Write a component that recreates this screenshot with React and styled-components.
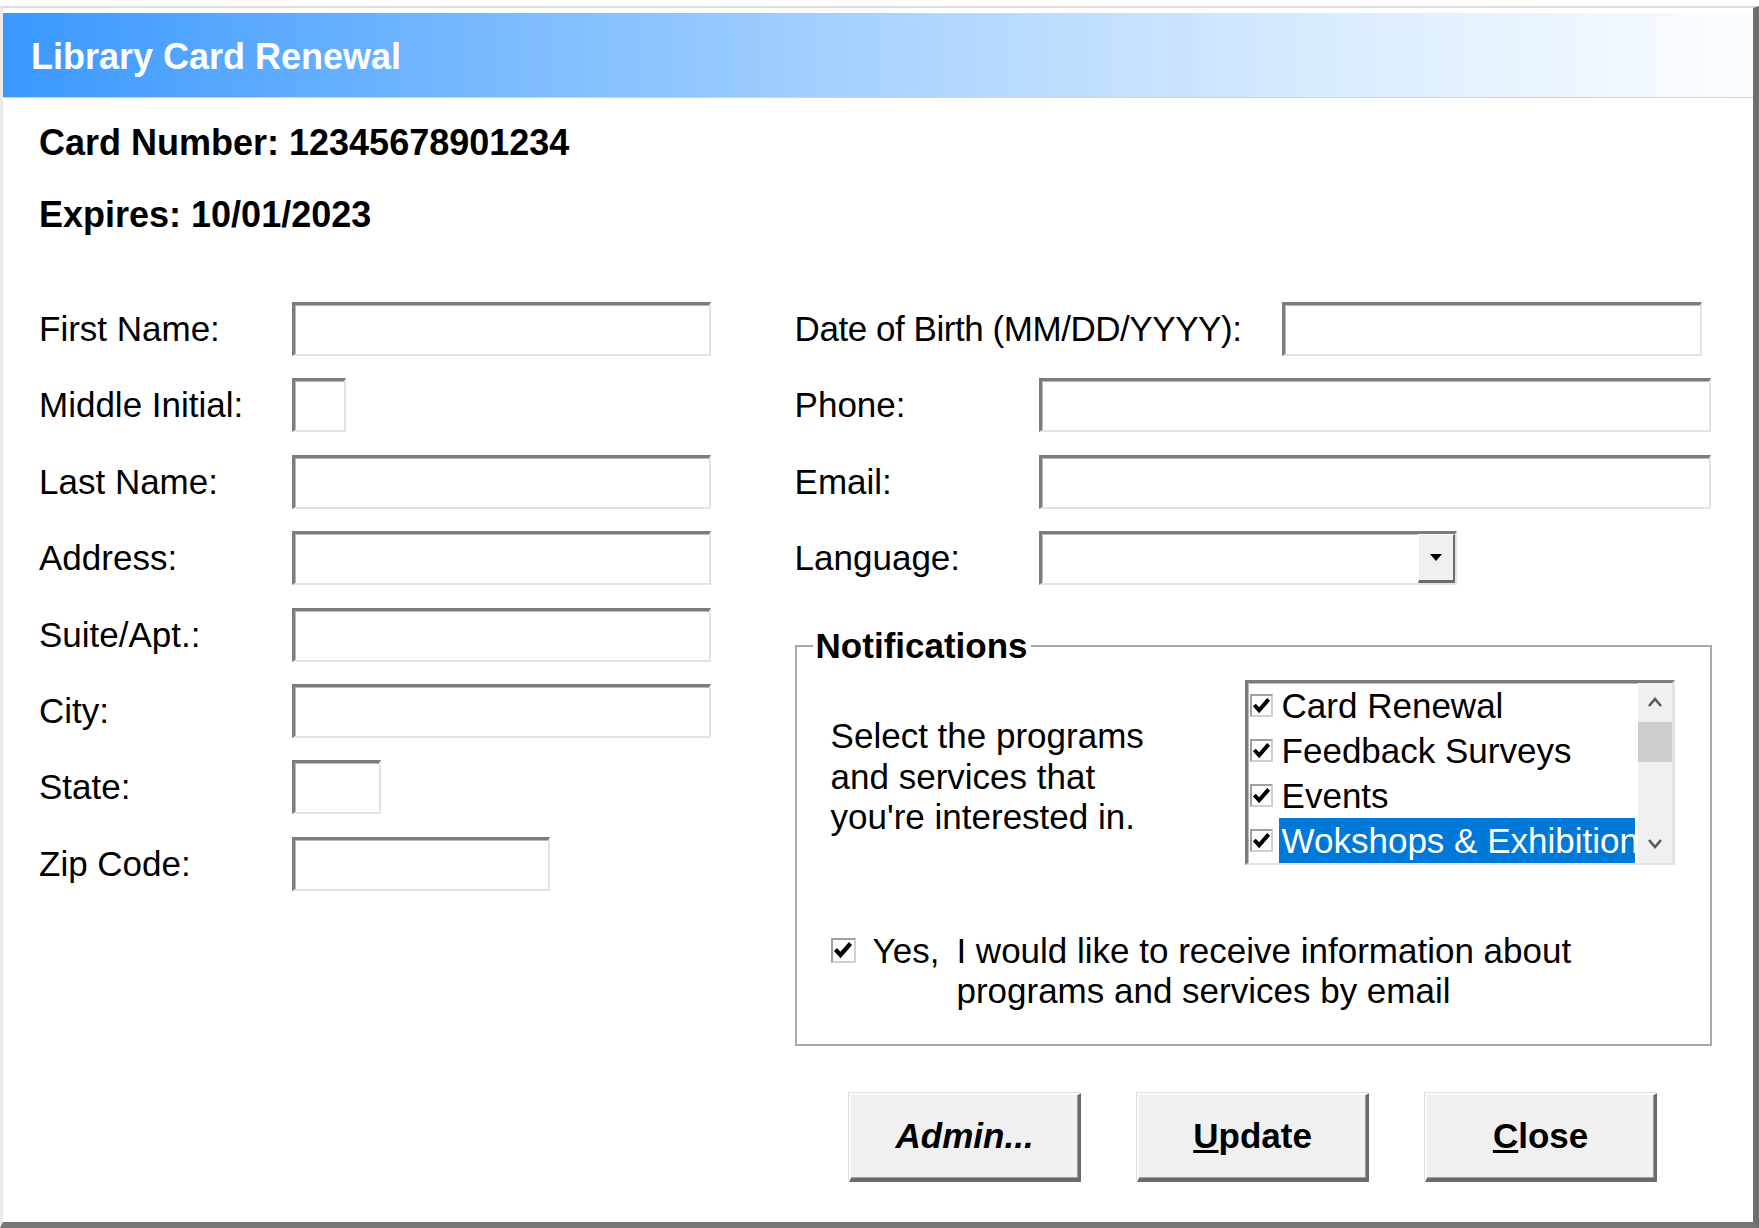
import React from "react";
import styled, { createGlobalStyle } from "styled-components";

const Global = createGlobalStyle`
  html, body { margin: 0; padding: 0; background: #fff; }
  body { font-family: "Liberation Sans", Arial, sans-serif; color: #000; }
  * { box-sizing: border-box; }
`;

const Win = styled.div`
  width: 1759px;
  height: 1222px;
  margin-top: 6px;
  border-top: 2px solid #dcdcdc;
  border-left: 3px solid #ebebeb;
  border-right: 6px solid #6e6e6e;
  border-bottom: 6px solid #767676;
  background: #fff;
  display: flex;
  flex-direction: column;
`;

const TitleBar = styled.div`
  margin-top: 5px;
  height: 85px;
  display: flex;
  align-items: center;
  padding: 4px 0 0 28px;
  background: linear-gradient(
    to right,
    #3a98ff 0%,
    #72b6ff 25%,
    #a9d3ff 50%,
    #d8ebff 75%,
    #fbfdff 100%
  );
  border-bottom: 1px solid #b4d8ff;
  color: #fff;
  font-weight: bold;
  font-size: 36px;
`;

const Content = styled.div`
  padding: 22.8px 0 0 36px;
`;

const InfoLine = styled.div`
  font-weight: bold;
  font-size: 36px;
  line-height: 44px;
  & + & {
    margin-top: 28.2px;
  }
`;

const Form = styled.div`
  display: flex;
  gap: 80.6px;
  margin-top: 65px;
`;

const FieldGrid = styled.div`
  display: grid;
  grid-template-columns: ${(p) => p.$labelCol}px auto;
  grid-auto-rows: 54px;
  row-gap: 22.4px;
  align-items: center;
  width: ${(p) => p.$width}px;
`;

const Label = styled.div`
  font-size: 35px;
  line-height: 40px;
  white-space: nowrap;
  letter-spacing: ${(p) => (p.$tight ? "-0.45px" : "0")};
`;

const TextBox = styled.input`
  display: block;
  width: ${(p) => p.$w}px;
  height: 54px;
  margin: 0 0 0 ${(p) => p.$offset || 0}px;
  padding: 0 6px;
  font: 35px "Liberation Sans", Arial, sans-serif;
  background: #fff;
  border-style: solid;
  border-width: 3px 2px 2px 3px;
  border-color: #7c7c7c #e3e3e3 #e3e3e3 #7c7c7c;
  box-shadow: inset 1px 1px 0 #b9b9b9;
  outline: none;
`;

const RightCol = styled.div`
  width: 917px;
  display: flex;
  flex-direction: column;
`;

const Combo = styled.div`
  width: 418px;
  height: 54px;
  display: flex;
  justify-content: flex-end;
  background: #fff;
  border-style: solid;
  border-width: 3px 2px 2px 3px;
  border-color: #7c7c7c #e3e3e3 #e3e3e3 #7c7c7c;
  box-shadow: inset 1px 1px 0 #b9b9b9;
`;

const ComboButton = styled.div`
  width: 37px;
  height: 100%;
  display: flex;
  align-items: center;
  justify-content: center;
  background: #f0f0f0;
  border-style: solid;
  border-width: 1px 2px 3px 1px;
  border-color: #fff #6b6b6b #6b6b6b #fff;
`;

const Arrow = styled.div`
  width: 0;
  height: 0;
  border-left: 6px solid transparent;
  border-right: 6px solid transparent;
  border-top: 7px solid #000;
`;

const Group = styled.fieldset`
  margin: 40.8px 0 0 0;
  padding: 0 0 32.4px 0;
  min-width: 0;
  width: 917px;
  border: 2px solid #a9a9a9;
`;

const Legend = styled.legend`
  margin-left: 16px;
  padding: 0 3px;
  font-weight: bold;
  font-size: 35px;
  line-height: 40px;
`;

const NotifRow = styled.div`
  display: flex;
  align-items: center;
  margin-top: 14px;
  padding-left: 34px;
`;

const Desc = styled.div`
  width: 414px;
  margin-top: 9px;
  font-size: 35px;
  line-height: 40.5px;
`;

const ListBox = styled.div`
  width: 430px;
  height: 185px;
  display: flex;
  background: #fff;
  border-style: solid;
  border-width: 3px 3px 2px 3px;
  border-color: #7c7c7c #e3e3e3 #e3e3e3 #7c7c7c;
  box-shadow: inset 1px 1px 0 #b9b9b9;
`;

const Items = styled.div`
  flex: 1;
  min-width: 0;
  overflow: hidden;
  display: flex;
  flex-direction: column;
`;

const Item = styled.div`
  height: 45px;
  display: flex;
  align-items: center;
  padding-left: 2px;
`;

const ItemText = styled.div`
  flex: 1;
  height: 45px;
  margin: 0 3px 0 6px;
  padding-left: 3px;
  font-size: 35px;
  line-height: 45px;
  white-space: nowrap;
  overflow: hidden;
  background: ${(p) => (p.$selected ? "#0078d7" : "transparent")};
  color: ${(p) => (p.$selected ? "#fff" : "#000")};
`;

const CheckBox = styled.div`
  flex: none;
  width: ${(p) => p.$size}px;
  height: ${(p) => p.$size}px;
  display: flex;
  align-items: center;
  justify-content: center;
  background: #fff;
  border-style: solid;
  border-width: 2px;
  border-color: #a0a0a0 #d0d0d0 #d0d0d0 #a0a0a0;
`;

const ScrollBar = styled.div`
  width: 34px;
  display: flex;
  flex-direction: column;
  background: #f0f0f0;
`;

const ScrollBtn = styled.div`
  height: 38px;
  display: flex;
  align-items: center;
  justify-content: center;
`;

const Track = styled.div`
  flex: 1;
`;

const Thumb = styled.div`
  height: 40px;
  margin-top: 1px;
  background: #cdcdcd;
`;

const YesRow = styled.div`
  display: flex;
  align-items: flex-start;
  margin-top: 65.6px;
  padding-left: 34px;
  font-size: 35px;
  line-height: 40.5px;
`;

const YesBox = styled(CheckBox)`
  margin-top: 7.4px;
`;

const YesWord = styled.span`
  margin-left: 17px;
`;

const YesText = styled.div`
  margin-left: 17px;
`;

const ButtonRow = styled.div`
  display: flex;
  justify-content: center;
  gap: 56px;
  margin-top: 47px;
`;

const Button = styled.button`
  width: 232px;
  height: 89px;
  padding: 0;
  background: #f0f0f0;
  font-family: "Liberation Sans", Arial, sans-serif;
  font-size: 35px;
  font-weight: bold;
  font-style: ${(p) => (p.$italic ? "italic" : "normal")};
  color: #000;
  border-style: solid;
  border-width: 2px 3px 4px 2px;
  border-color: #fbfbfb #6b6b6b #6b6b6b #fbfbfb;
  box-shadow: -1px -1px 0 #e0e0e0, inset -1px -1px 0 #a0a0a0;
`;

const Check = ({ size = 18 }) => (
  <svg width={size} height={size} viewBox="0 0 20 20">
    <path
      d="M2.5 9.5 L7.5 15 L17.5 3.5"
      fill="none"
      stroke="#000"
      strokeWidth="4.2"
      strokeLinejoin="miter"
    />
  </svg>
);

const Chevron = ({ up }) => (
  <svg width="16" height="12" viewBox="0 0 16 12">
    <path
      d={up ? "M2 10 L8 3 L14 10" : "M2 2 L8 9 L14 2"}
      fill="none"
      stroke="#5a5a5a"
      strokeWidth="2.6"
    />
  </svg>
);

const leftFields = [
  ["First Name:", 419],
  ["Middle Initial:", 54],
  ["Last Name:", 419],
  ["Address:", 419],
  ["Suite/Apt.:", 419],
  ["City:", 419],
  ["State:", 89],
  ["Zip Code:", 258],
];

const listItems = ["Card Renewal", "Feedback Surveys", "Events", "Wokshops & Exhibitions"];

export default function App() {
  return (
    <>
      <Global />
      <Win>
        <TitleBar>Library Card Renewal</TitleBar>
        <Content>
          <InfoLine>Card Number: 12345678901234</InfoLine>
          <InfoLine>Expires: 10/01/2023</InfoLine>
          <Form>
            <FieldGrid $labelCol={253} $width={675}>
              {leftFields.map(([label, w]) => (
                <React.Fragment key={label}>
                  <Label>{label}</Label>
                  <TextBox $w={w} />
                </React.Fragment>
              ))}
            </FieldGrid>
            <RightCol>
              <FieldGrid $labelCol={244} $width={917}>
                <Label $tight>Date of Birth (MM/DD/YYYY):</Label>
                <TextBox $w={420} $offset={243} />
                <Label>Phone:</Label>
                <TextBox $w={672} />
                <Label>Email:</Label>
                <TextBox $w={672} />
                <Label>Language:</Label>
                <Combo>
                  <ComboButton>
                    <Arrow />
                  </ComboButton>
                </Combo>
              </FieldGrid>
              <Group>
                <Legend>Notifications</Legend>
                <NotifRow>
                  <Desc>
                    Select the programs
                    <br />
                    and services that
                    <br />
                    you're interested in.
                  </Desc>
                  <ListBox>
                    <Items>
                      {listItems.map((it, i) => (
                        <Item key={it}>
                          <CheckBox $size={23}>
                            <Check size={19} />
                          </CheckBox>
                          <ItemText $selected={i === 3}>{it}</ItemText>
                        </Item>
                      ))}
                    </Items>
                    <ScrollBar>
                      <ScrollBtn>
                        <Chevron up />
                      </ScrollBtn>
                      <Track>
                        <Thumb />
                      </Track>
                      <ScrollBtn>
                        <Chevron />
                      </ScrollBtn>
                    </ScrollBar>
                  </ListBox>
                </NotifRow>
                <YesRow>
                  <YesBox $size={25}>
                    <Check size={20} />
                  </YesBox>
                  <YesWord>Yes,</YesWord>
                  <YesText>
                    I would like to receive information about
                    <br />
                    programs and services by email
                  </YesText>
                </YesRow>
              </Group>
              <ButtonRow>
                <Button $italic>Admin...</Button>
                <Button>
                  <u>U</u>pdate
                </Button>
                <Button>
                  <u>C</u>lose
                </Button>
              </ButtonRow>
            </RightCol>
          </Form>
        </Content>
      </Win>
    </>
  );
}
